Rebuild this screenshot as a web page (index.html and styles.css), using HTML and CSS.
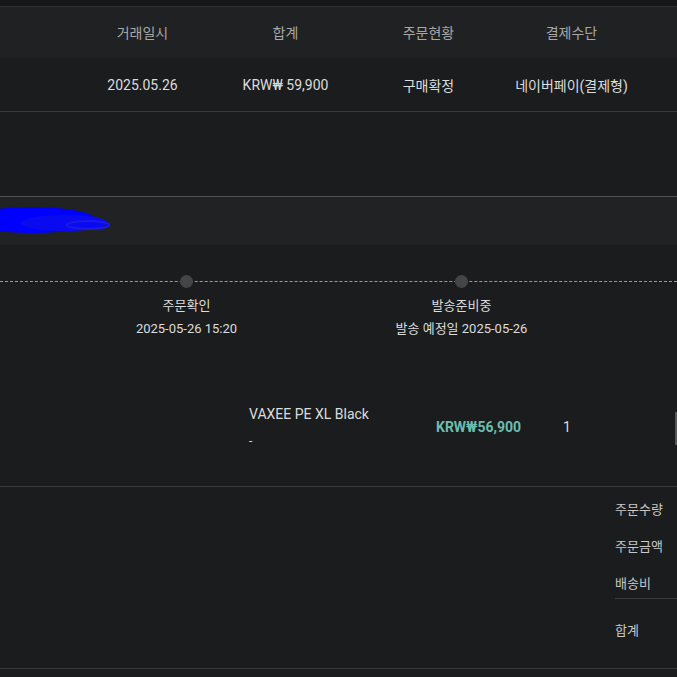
FILE: index.html
```html
<!DOCTYPE html>
<html lang="ko">

<head>
    <meta charset="UTF-8">
    <meta name="viewport" content="width=device-width, initial-scale=1.0">
    <title>주문상세</title>
    <link rel="stylesheet" href="styles.css">
</head>

<body>
    <div class="topbar"></div>

    <div class="order-table">
        <div class="table-row table-head">
            <div class="cell"></div>
            <div class="cell">거래일시</div>
            <div class="cell">합계</div>
            <div class="cell">주문현황</div>
            <div class="cell">결제수단</div>
            <div class="cell"></div>
        </div>
        <div class="table-row table-body">
            <div class="cell"></div>
            <div class="cell">2025.05.26</div>
            <div class="cell">KRW₩ 59,900</div>
            <div class="cell">구매확정</div>
            <div class="cell">네이버페이(결제형)</div>
            <div class="cell"></div>
        </div>
    </div>

    <div class="spacer"></div>

    <div class="section-head">
        <svg class="scribble" width="125" height="40" viewBox="0 0 125 40">
            <ellipse cx="42" cy="19" rx="64" ry="13" fill="#0000ff" />
            <ellipse cx="74" cy="22" rx="44" ry="8" fill="#0a0af0" />
            <ellipse cx="98" cy="24" rx="21" ry="4" fill="none" stroke="#1a1ae6" stroke-width="2" />
        </svg>
    </div>

    <div class="progress">
        <div class="progress-line"></div>
        <div class="steps">
            <div class="step">
                <span class="dot"></span>
                <div class="step-title">주문확인</div>
                <div class="step-date">2025-05-26 15:20</div>
            </div>
            <div class="step">
                <span class="dot"></span>
                <div class="step-title">발송준비중</div>
                <div class="step-date">발송 예정일 2025-05-26</div>
            </div>
        </div>
    </div>

    <div class="product-row">
        <div class="product-info">
            <div class="product-name">VAXEE PE XL Black</div>
            <div class="product-option">-</div>
        </div>
        <div class="product-price">KRW₩56,900</div>
        <div class="product-qty">1</div>
        <div class="edge-bar"></div>
    </div>

    <div class="summary">
        <div class="summary-list">
            <div class="summary-item">주문수량</div>
            <div class="summary-item">주문금액</div>
            <div class="summary-item">배송비</div>
            <div class="summary-item summary-total">합계</div>
        </div>
    </div>
</body>

</html>
```

FILE: styles.css
```css
body {
    margin: 0;
    background-color: #1b1c1e;
    color: #dcdcdc;
    font-family: Roboto, "Noto Sans CJK KR", sans-serif;
    font-size: 13px;
    overflow: hidden;
}

.topbar {
    height: 6px;
    background-color: #161719;
    border-bottom: 1px solid #2e3032;
}

.table-row {
    display: grid;
    grid-template-columns: 71px 143px 143px 143px 143px 143px;
    align-items: center;
    text-align: center;
    white-space: nowrap;
    font-size: 14px;
}

.table-head {
    height: 50px;
    padding-bottom: 1px;
    background-color: #1f2123;
    color: #a8a8a8;
}

.table-body {
    height: 53px;
    border-bottom: 1px solid #37393b;
}

.spacer {
    height: 84px;
}

.section-head {
    height: 48px;
    border-top: 1px solid #505254;
    background-color: #202224;
    display: flex;
    align-items: center;
}

.scribble {
    margin-left: -10px;
}

.progress {
    position: relative;
    height: 135px;
}

.progress-line {
    position: absolute;
    left: 0;
    right: 0;
    top: 36px;
    border-top: 1px dashed #9a9a9a;
}

.steps {
    display: flex;
    padding-left: 49px;
    padding-top: 30px;
}

.step {
    width: 275px;
    display: flex;
    flex-direction: column;
    align-items: center;
    position: relative;
}

.dot {
    width: 13px;
    height: 13px;
    border-radius: 50%;
    background-color: #434548;
}

.step-title {
    margin-top: 9px;
    line-height: 18px;
}

.step-date {
    margin-top: 5px;
    line-height: 18px;
}

.product-row {
    display: flex;
    align-items: center;
    height: 93px;
    padding-bottom: 13px;
    border-bottom: 1px solid #37393b;
    position: relative;
}

.product-info {
    margin-left: 249px;
    width: 187px;
    padding-top: 2px;
}

.product-name {
    font-size: 14px;
    line-height: 18px;
}

.product-option {
    margin-top: 9px;
    font-size: 12px;
    line-height: 18px;
}

.product-price {
    width: 127px;
    font-size: 14px;
    font-weight: bold;
    color: #6bbdae;
}

.product-qty {
    width: 20px;
    font-size: 14px;
}

.edge-bar {
    position: absolute;
    right: 0;
    top: 32px;
    width: 2px;
    height: 33px;
    background-color: #555759;
}

.summary {
    display: flex;
    justify-content: flex-end;
    height: 181px;
    border-bottom: 1px solid #37393b;
}

.summary-list {
    width: 62px;
    padding-top: 13px;
}

.summary-item {
    height: 37px;
    line-height: 19px;
    color: #c8c8c8;
}

.summary-item:nth-child(3) {
    height: 24px;
    border-bottom: 1px solid #3a3c3e;
}

.summary-total {
    margin-top: 22px;
}
```
